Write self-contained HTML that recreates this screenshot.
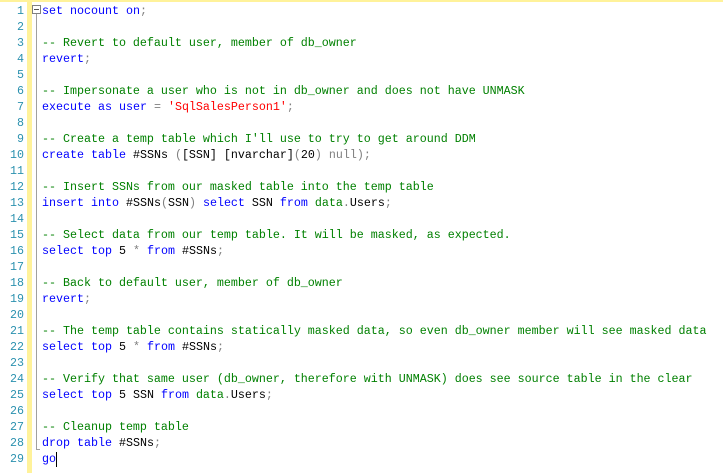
<!DOCTYPE html><html><head><style>
body{margin:0;width:723px;height:473px;background:#fff;overflow:hidden;position:relative;font-family:"Liberation Mono",monospace;}
.top{position:absolute;left:0;top:0;width:723px;height:2px;background:#fff29a}
.ybar{position:absolute;left:27px;top:2px;width:5px;height:471px;background:#fff29a}
.nums{position:absolute;left:0;top:3px;width:24px;text-align:right;color:#2b91af;font-size:11.67px;line-height:16px;font-family:"Liberation Mono",monospace}
.code{position:absolute;left:42px;top:3px;font-size:11.67px;line-height:16px;white-space:pre;color:#000;font-family:"Liberation Mono",monospace}
.k{color:#0000ff}.c{color:#008000}.p{color:#808080}.s{color:#ff0000}.g{color:#008000}
.fold{position:absolute;left:32px;top:5px;width:7px;height:7px;border:1px solid #808080;background:#fff}
.fold:after{content:"";position:absolute;left:1px;top:3px;width:5px;height:1px;background:#555}
.vl{position:absolute;left:36px;top:14px;width:1px;height:436px;background:#a0a0a0}
.hl{position:absolute;left:36px;top:449px;width:4px;height:1px;background:#a0a0a0}
.cur{position:absolute;left:56px;top:452px;width:1px;height:15px;background:#000}
</style></head><body>
<div class="top"></div><div class="ybar"></div>
<div class="nums">1<br>2<br>3<br>4<br>5<br>6<br>7<br>8<br>9<br>10<br>11<br>12<br>13<br>14<br>15<br>16<br>17<br>18<br>19<br>20<br>21<br>22<br>23<br>24<br>25<br>26<br>27<br>28<br>29</div>
<div class="vl"></div><div class="hl"></div><div class="fold"></div>
<div class="code"><span class="k">set</span> <span class="k">nocount</span> <span class="k">on</span><span class="p">;</span>

<span class="c">-- Revert to default user, member of db_owner</span>
<span class="k">revert</span><span class="p">;</span>

<span class="c">-- Impersonate a user who is not in db_owner and does not have UNMASK</span>
<span class="k">execute</span> <span class="k">as</span> <span class="k">user</span> <span class="p">=</span> <span class="s">'SqlSalesPerson1'</span><span class="p">;</span>

<span class="c">-- Create a temp table which I'll use to try to get around DDM</span>
<span class="k">create</span> <span class="k">table</span> #SSNs <span class="p">(</span>[SSN] [nvarchar]<span class="p">(</span>20<span class="p">)</span> <span class="p">null);</span>

<span class="c">-- Insert SSNs from our masked table into the temp table</span>
<span class="k">insert</span> <span class="k">into</span> #SSNs<span class="p">(</span>SSN<span class="p">)</span> <span class="k">select</span> SSN <span class="k">from</span> <span class="g">data</span><span class="p">.</span>Users<span class="p">;</span>

<span class="c">-- Select data from our temp table. It will be masked, as expected.</span>
<span class="k">select</span> <span class="k">top</span> 5 <span class="p">*</span> <span class="k">from</span> #SSNs<span class="p">;</span>

<span class="c">-- Back to default user, member of db_owner</span>
<span class="k">revert</span><span class="p">;</span>

<span class="c">-- The temp table contains statically masked data, so even db_owner member will see masked data</span>
<span class="k">select</span> <span class="k">top</span> 5 <span class="p">*</span> <span class="k">from</span> #SSNs<span class="p">;</span>

<span class="c">-- Verify that same user (db_owner, therefore with UNMASK) does see source table in the clear</span>
<span class="k">select</span> <span class="k">top</span> 5 SSN <span class="k">from</span> <span class="g">data</span><span class="p">.</span>Users<span class="p">;</span>

<span class="c">-- Cleanup temp table</span>
<span class="k">drop</span> <span class="k">table</span> #SSNs<span class="p">;</span>
<span class="k">go</span></div>
<div class="cur"></div>
</body></html>
